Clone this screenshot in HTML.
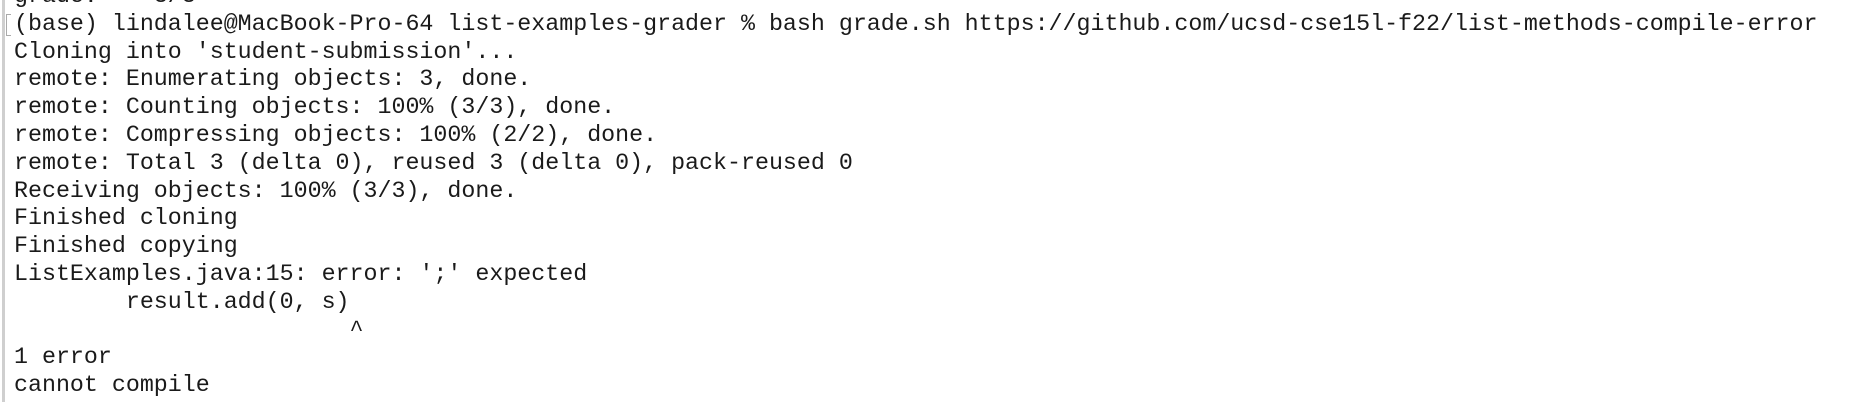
<!DOCTYPE html>
<html><head><style>
html,body{margin:0;padding:0;background:#fff;width:1858px;height:402px;overflow:hidden}
.bar{position:absolute;left:2px;top:0;width:3px;height:402px;background:#cfcfcf}
pre{position:absolute;left:14px;top:-17px;margin:0;font-family:"Liberation Mono",monospace;font-size:23.3px;line-height:27.8px;color:#1a1a1a}
.br{position:absolute;left:6px;top:14px;width:4px;height:20px;border:1px solid #aaa;border-right:none}
</style></head><body>
<div class="bar"></div>
<div class="br"></div>
<pre>grade:    3/3
(base) lindalee@MacBook-Pro-64 list-examples-grader % bash grade.sh https://github.com/ucsd-cse15l-f22/list-methods-compile-error
Cloning into 'student-submission'...
remote: Enumerating objects: 3, done.
remote: Counting objects: 100% (3/3), done.
remote: Compressing objects: 100% (2/2), done.
remote: Total 3 (delta 0), reused 3 (delta 0), pack-reused 0
Receiving objects: 100% (3/3), done.
Finished cloning
Finished copying
ListExamples.java:15: error: ';' expected
        result.add(0, s)
                        ^
1 error
cannot compile</pre>
</body></html>
